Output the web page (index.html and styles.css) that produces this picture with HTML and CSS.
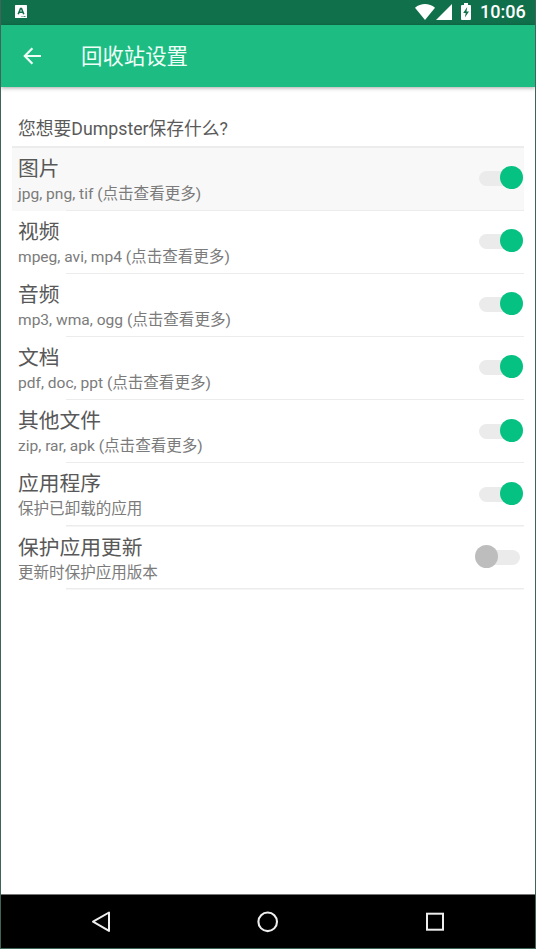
FILE: index.html
```html
<!DOCTYPE html>
<html lang="zh-CN">
<head>
<meta charset="utf-8">
<title>回收站设置</title>
<link rel="stylesheet" href="styles.css">
</head>
<body>
<div class="screen">
  <header class="status">
    <svg class="ime" width="12" height="13" viewBox="0 0 12 13"><rect width="12" height="13" rx=".5" fill="#fff"/><path d="M3.2 9.2 5.5 3.5h1L8.8 9.2M4.2 7.3h3.6" fill="none" stroke="#11704c" stroke-width="1.6"/><path d="M6.5 11.5h1M8.5 11.5h2" stroke="#11704c" stroke-width=".8"/></svg>
    <svg class="wifi" width="20" height="16" viewBox="0 0 20 16"><path d="M0 3.7C5.8-1.2 14.2-1.2 20 3.7L10 16Z" fill="#fff"/></svg>
    <svg class="signal" width="16" height="16" viewBox="0 0 16 16"><path d="M16 0v16H0Z" fill="#fff"/></svg>
    <svg class="battery" width="10" height="17" viewBox="0 0 10 17"><path d="M3 0h4v2h2q1 0 1 1v13q0 1-1 1H1q-1 0-1-1V3q0-1 1-1h2Z" fill="#fff"/><path d="M6.2 4 2.2 10h2.5l-.8 4.5L8 8.5H5.5Z" fill="#11704c"/></svg>
    <span class="clock">10:06</span>
  </header>
  <div class="appbar">
    <svg width="18" height="18" viewBox="0 0 18 18"><path d="M18 9H2.2M9.4 1.2 1.8 9l7.6 7.8" fill="none" stroke="#effff8" stroke-width="2.2"/></svg>
    <h1>回收站设置</h1>
  </div>
  <main>
    <h2>您想要Dumpster保存什么?</h2>
    <div class="row pressed"><div><h3>图片</h3><p>jpg, png, tif (点击查看更多)</p></div><span class="switch on"></span></div>
    <div class="row"><div><h3>视频</h3><p>mpeg, avi, mp4 (点击查看更多)</p></div><span class="switch on"></span></div>
    <div class="row"><div><h3>音频</h3><p>mp3, wma, ogg (点击查看更多)</p></div><span class="switch on"></span></div>
    <div class="row"><div><h3>文档</h3><p>pdf, doc, ppt (点击查看更多)</p></div><span class="switch on"></span></div>
    <div class="row"><div><h3>其他文件</h3><p>zip, rar, apk (点击查看更多)</p></div><span class="switch on"></span></div>
    <div class="row"><div><h3>应用程序</h3><p>保护已卸载的应用</p></div><span class="switch on"></span></div>
    <div class="row"><div><h3>保护应用更新</h3><p>更新时保护应用版本</p></div><span class="switch"></span></div>
  </main>
  <nav>
    <svg width="20" height="22" viewBox="0 0 20 22"><path d="M18 1.5v18.4L2 10.7Z" fill="none" stroke="#eee" stroke-width="2" stroke-linejoin="round"/></svg>
    <svg width="22" height="22" viewBox="0 0 22 22"><circle cx="10.7" cy="10.8" r="9.3" fill="none" stroke="#eee" stroke-width="2.1"/></svg>
    <svg width="20" height="20" viewBox="0 0 20 20"><rect x="2" y="1.7" width="16" height="16" fill="none" stroke="#eee" stroke-width="2"/></svg>
  </nav>
</div>
</body>
</html>
```
FILE: styles.css
```css
* { box-sizing: border-box; margin: 0; padding: 0; }
body { font-family: Roboto, "Noto Sans CJK SC", sans-serif; background: #fff; }
h1, h2, h3 { font-weight: 400; }
svg { display: block; flex: none; }
.screen {
  height: 949px;
  display: flex;
  flex-direction: column;
  border: solid #3f6558;
  border-width: 0 1px 1px;
  overflow: hidden;
}
.status {
  height: 25px;
  flex: none;
  display: flex;
  align-items: center;
  padding: 0 9px 2px 14px;
  background: #11704c;
}
.wifi { margin-left: auto; }
.signal { margin-left: 1px; }
.battery { margin-left: 9px; }
.clock {
  width: 46px;
  margin-left: 9px;
  font-size: 18px;
  line-height: 23px;
  font-weight: 500;
  color: #fff;
  white-space: nowrap;
}
.appbar {
  height: 62px;
  flex: none;
  display: flex;
  align-items: center;
  padding-left: 22px;
  gap: 40px;
  background: #1dbc83;
  box-shadow: 0 1px 4px rgba(0, 0, 0, .35);
}
h1 { padding-top: 1px; font-size: 21.4px; line-height: 30px; color: #effff8; }
main { flex: 1; padding: 0 11px; }
h2 {
  height: 61px;
  padding: 30px 6px 0;
  font-size: 17.75px;
  line-height: 24px;
  color: #5a5a5a;
  border-bottom: 2px solid #ececec;
}
.row {
  height: 63.1px;
  display: flex;
  justify-content: space-between;
  padding: 7px 0 0 6px;
  background: linear-gradient(#ececec, #ececec) 54px 100% / 100% 1.5px no-repeat;
}
.row.pressed { background-color: #f8f8f8; }
h3 { font-size: 20.75px; line-height: 28px; color: #585858; }
p { font-size: 15.55px; line-height: 22.6px; color: #7b7b7b; }
.switch {
  position: relative;
  display: flex;
  align-items: center;
  width: 45px;
  height: 23px;
  margin: 11.2px 4px 0 0;
}
.switch::before {
  content: "";
  width: 40px;
  height: 15px;
  margin: 2px 0 0 5px;
  border-radius: 8px;
  background: #ebebeb;
}
.switch::after {
  content: "";
  position: absolute;
  left: 0;
  top: 0;
  width: 23px;
  height: 23px;
  border-radius: 50%;
  background: #bdbdbd;
}
.switch.on { margin-right: 1px; }
.switch.on::before { margin-left: 1px; }
.switch.on::after { left: 22px; background: #05c182; }
nav {
  height: 54px;
  flex: none;
  display: flex;
  justify-content: space-between;
  align-items: center;
  padding: 0 90px 0 90px;
  background: #000;
  border-top: 1px solid #777;
}
```
